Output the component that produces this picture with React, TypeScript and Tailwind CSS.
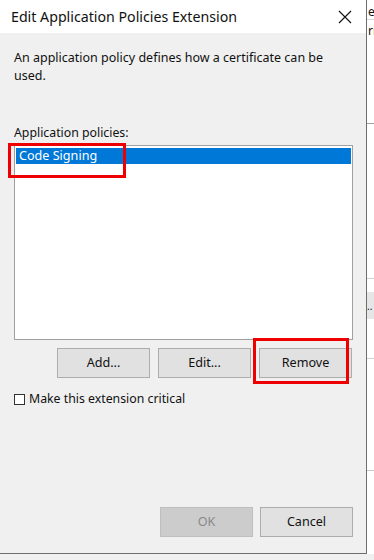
import React from "react";

const font = { fontFamily: '"Noto Sans", "Open Sans", sans-serif' };

function Btn({ label, disabled }: { label: string; disabled?: boolean }) {
  return (
    <div
      className={
        "w-[93px] h-[30px] flex items-center justify-center text-[12.6px] border " +
        (disabled
          ? "bg-[#cccccc] border-[#bfbfbf] text-[#8a8a8a]"
          : "bg-[#e1e1e1] border-[#adadad] text-[#111]")
      }
    >
      {label}
    </div>
  );
}

export default function App() {
  return (
    <div className="w-[374px] h-[560px] bg-[#f0f0f0] overflow-hidden relative" style={font}>
      <div className="flex h-[554px]">
        <div className="w-[367px] h-[554px] flex flex-col bg-[#f0f0f0] border-r border-b border-[#6e6e6e]">
          <div className="h-[33px] bg-white flex items-center justify-between pl-[11px] pr-[14px]">
            <span className="text-[14.2px] text-[#111]">Edit Application Policies Extension</span>
            <svg width="14" height="14" viewBox="0 0 14 14">
              <path d="M1 1L13 13M13 1L1 13" stroke="#111" strokeWidth="1.1" />
            </svg>
          </div>
          <div className="flex flex-col px-[14px] pt-[16px] text-[12.3px] text-[#111] flex-1">
            <p className="leading-[18px] w-[325px] text-[12.5px]">
              An application policy defines how a certificate can be used.
            </p>
            <div className="mt-[39px] leading-[18px]">Application policies:</div>
            <div className="mt-[3px] w-[339px] h-[195px] border border-[#a0a0a0] bg-white p-[2px_1px]">
              <div className="h-[16px] bg-[#0078d7] text-white text-[12.6px] leading-[16px] pl-[3px]">Code Signing</div>
            </div>
            <div className="mt-[8px] w-[338px] flex justify-end gap-[8px]">
              <Btn label="Add..." />
              <Btn label="Edit..." />
              <Btn label="Remove" />
            </div>
            <div className="mt-[14px] flex items-center gap-[4px] h-[14px]">
              <div className="w-[11px] h-[11px] border border-[#333] bg-white" />
              <span>Make this extension critical</span>
            </div>
            <div className="flex-1" />
            <div className="w-[339px] flex justify-end gap-[7px] mb-[16px]">
              <Btn label="OK" disabled />
              <Btn label="Cancel" />
            </div>
          </div>
        </div>
        <div className="flex-1 bg-white flex flex-col overflow-hidden text-[12px] text-[#111] leading-[14px]">
          <div className="h-[20px] flex items-end pl-[1px] border-b border-[#d9d9d9]">en</div>
          <div className="h-[20px] pl-[1px] pt-[4px]">ri</div>
          <div className="h-[84px] border-b border-[#a0a0a0]" />
          <div className="h-[155px] border-b border-[#d0d0d0]" />
          <div className="h-[13px]" />
          <div className="h-[27px] bg-[#e6e6e6] flex items-center text-[10px]">..</div>
          <div className="h-[40px] border-b border-[#d0d0d0]" />
          <div className="h-[112px] border-b border-[#c8c8c8]" />
        </div>
      </div>
      <div className="absolute left-[8px] top-[143px] w-[118px] h-[35px] border-[3px] border-[#ee0000]" />
      <div className="absolute left-[253px] top-[338px] w-[96px] h-[46px] border-[3px] border-[#ee0000]" />
    </div>
  );
}
